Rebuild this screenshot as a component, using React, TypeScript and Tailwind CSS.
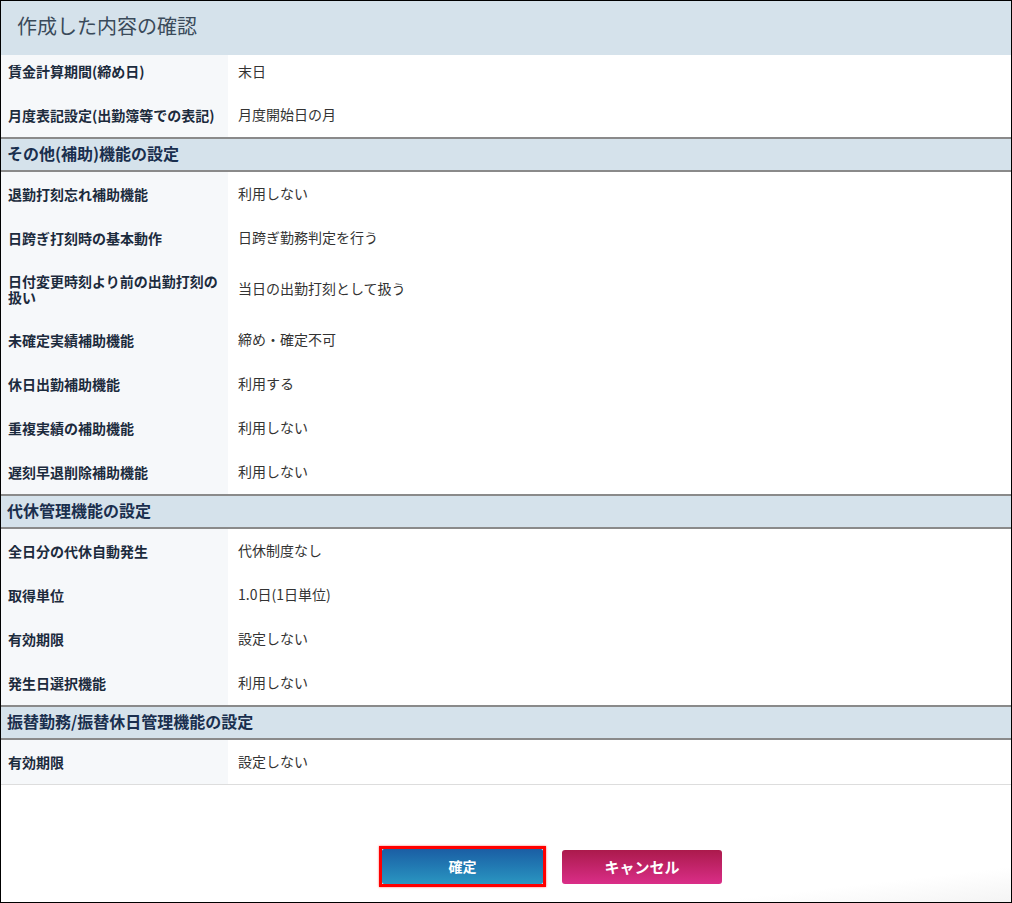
import React from "react";

const font = { fontFamily: '"Noto Sans CJK JP", "Noto Sans", sans-serif' };

type Row = { label: React.ReactNode; value: string; h: string; pad?: string };

function Rows({ rows }: { rows: Row[] }) {
  return (
    <div className="flex flex-col">
      {rows.map((r, i) => (
        <div key={i} className={`flex ${r.h}`}>
          <div
            className={`w-[227px] shrink-0 bg-[#f6f8fa] pl-[7px] flex items-center text-[14px] font-bold text-[#1c2b3d] leading-[16px] ${r.pad ?? "pb-[1px]"}`}
          >
            {r.label}
          </div>
          <div className={`flex-1 bg-white pl-[10px] flex items-center text-[14px] text-[#333] ${r.pad ?? "pb-[1px]"}`}>
            {r.value}
          </div>
        </div>
      ))}
    </div>
  );
}

function Header({ title }: { title: string }) {
  return (
    <div className="h-[35px] border-t-2 border-b-2 border-[#8a8a8a] bg-[#d5e2eb] pl-[6px] pb-[3px] flex items-center text-[16px] font-bold text-[#1a2f4e]">
      {title}
    </div>
  );
}

export default function App() {
  return (
    <div style={font} className="w-[1012px] h-[903px] border border-black bg-white flex flex-col overflow-hidden">
      <div className="h-[54px] bg-[#d5e2eb] pl-[16px] pb-[4px] flex items-center text-[20px] text-[#3a4a5a] shrink-0">
        作成した内容の確認
      </div>
      <Rows
        rows={[
          { label: "賃金計算期間(締め日)", value: "末日", h: "h-[38px]", pad: "pb-[6px]" },
          { label: "月度表記設定(出勤簿等での表記)", value: "月度開始日の月", h: "h-[44px]" },
        ]}
      />
      <Header title="その他(補助)機能の設定" />
      <Rows
        rows={[
          { label: "退勤打刻忘れ補助機能", value: "利用しない", h: "h-[44px]" },
          { label: "日跨ぎ打刻時の基本動作", value: "日跨ぎ勤務判定を行う", h: "h-[44px]" },
          {
            label: (
              <span>
                日付変更時刻より前の出勤打刻の
                <br />
                扱い
              </span>
            ),
            value: "当日の出勤打刻として扱う",
            h: "h-[58px]",
          },
          { label: "未確定実績補助機能", value: "締め・確定不可", h: "h-[44px]" },
          { label: "休日出勤補助機能", value: "利用する", h: "h-[44px]" },
          { label: "重複実績の補助機能", value: "利用しない", h: "h-[44px]" },
          { label: "遅刻早退削除補助機能", value: "利用しない", h: "h-[44px]" },
        ]}
      />
      <Header title="代休管理機能の設定" />
      <Rows
        rows={[
          { label: "全日分の代休自動発生", value: "代休制度なし", h: "h-[44px]" },
          { label: "取得単位", value: "1.0日(1日単位)", h: "h-[44px]" },
          { label: "有効期限", value: "設定しない", h: "h-[44px]" },
          { label: "発生日選択機能", value: "利用しない", h: "h-[44px]" },
        ]}
      />
      <Header title="振替勤務/振替休日管理機能の設定" />
      <Rows rows={[{ label: "有効期限", value: "設定しない", h: "h-[44px]" }]} />
      <div className="border-t border-[#dddddd]" />
      <div className="flex-1 flex items-start pt-[61px] pl-[378px] gap-[16px] bg-gradient-to-br from-white from-85% to-[#f4f4f4]">
        <div className="border-[3px] border-[#ff0000] shadow-[0_0_2px_#ff6b6b]">
          <button className="w-[161px] h-[35px] rounded-[2px] bg-gradient-to-b from-[#1b5ea4] to-[#2b96c1] text-white text-[14px] font-bold">
            確定
          </button>
        </div>
        <button className="mt-[4px] w-[160px] h-[34px] rounded-[3px] bg-gradient-to-b from-[#ab1a4c] to-[#da2d88] text-white text-[15px] font-bold">
          キャンセル
        </button>
      </div>
    </div>
  );
}
